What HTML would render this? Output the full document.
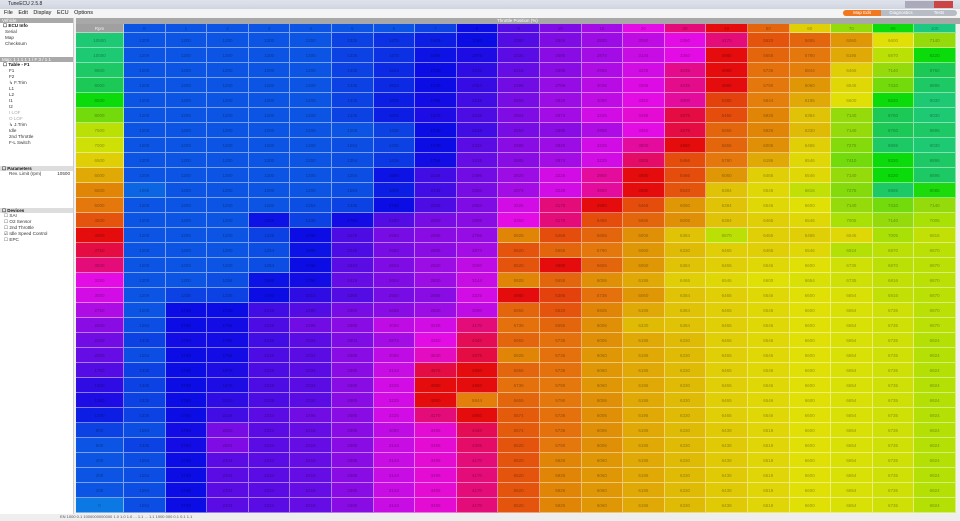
<!DOCTYPE html>
<html><head><meta charset="utf-8"><style>
*{margin:0;padding:0;box-sizing:border-box}
body{width:960px;height:521px;overflow:hidden;background:#f0f0f0;font-family:"Liberation Sans",sans-serif;position:relative}
.a{position:absolute}
#title{left:0;top:0;width:960px;height:9px;background:linear-gradient(#dfe3ec,#cfd5e0);font-size:5px;color:#222;padding:1px 0 0 8px}
#menu{left:0;top:9px;width:960px;height:9px;background:#f4f4f4;font-size:5.5px;color:#111;padding:1px 0 0 4px;word-spacing:4px}
#lp{left:0;top:18px;width:74px;height:496px;background:#fff;border-right:1px solid #ccc;font-size:4.6px;color:#333;line-height:6px}
.gb{background:#a9a9a9;color:#fff;height:5px;line-height:5px;font-size:4.5px;padding-left:2px}
.hd{font-weight:bold;color:#111;padding-left:3px}
.it{padding-left:9px}
#top{left:76px;top:18px;width:884px;height:6px;background:#a8a8a8}
#grid{left:76px;top:24px;width:880px}
.r{display:flex;height:15px}
.h{height:9px}
.c{width:41.6px;flex:none;border-right:1px solid rgba(255,255,255,.45);border-bottom:1px solid rgba(255,255,255,.45);font-size:4.5px;color:rgba(0,0,0,.35);display:flex;align-items:center;justify-content:center}
.c0{width:48px}
#st{left:0;top:514px;width:960px;height:7px;background:#eee;font-size:4px;color:#555;padding-left:60px}
</style></head><body>
<div id="title" class="a">TuneECU 2.5.8</div>
<div class="a" style="left:905px;top:1px;width:48px;height:7px;background:linear-gradient(90deg,#aab 0,#aab 60%,#c44 60%)"></div>
<div id="menu" class="a">File Edit Display ECU Options</div>
<div id="top" class="a"></div>
<div class="a" style="left:497px;top:18px;font-size:4.5px;color:#fff">Throttle Position (%)</div>
<div class="a" style="left:843px;top:10px;width:38px;height:6px;background:#f07820;border-radius:3px 0 0 3px;font-size:4.5px;color:#fff;text-align:center;line-height:6px">Map Edit</div>
<div class="a" style="left:881px;top:10px;width:40px;height:6px;background:#b8bcc4;font-size:4.5px;color:#fff;text-align:center;line-height:6px">Diagnostics</div>
<div class="a" style="left:921px;top:10px;width:36px;height:6px;background:#b8bcc4;border-radius:0 3px 3px 0;font-size:4.5px;color:#fff;text-align:center;line-height:6px">Tests</div>
<div id="lp" class="a">
<div class="gb">Vehicle</div>
<div class="hd">☐ ECU Info</div><div class="it" style="padding-left:5px">Serial<br>Map<br>Checksum</div>
<div style="height:10px"></div>
<div class="gb">Map: 1 1 1 1 1 / F 3 / 1 1</div>
<div class="hd">☐ Table - F1</div>
<div class="it">F1<br>F2<br>↳ F.Trim<br>L1<br>L2<br>I1<br>I2<br><span style="color:#aaa">I LOF<br>O LOF</span><br>↳ J.Trim<br>Idle<br>2nd Throttle<br>F-L Switch</div>
<div style="height:20px"></div>
<div class="gb" style="background:#ddd;color:#111;font-weight:bold">☐ Parameters</div>
<div class="it">Rev. Limit (rpm) <span style="float:right;padding-right:3px">10500</span></div>
<div style="height:31px"></div>
<div class="gb" style="background:#ddd;color:#111;font-weight:bold">☐ Devices</div>
<div style="padding-left:4px">☐ SAI<br>☐ O2 Sensor<br>☐ 2nd Throttle<br>☑ Idle Speed Control<br>☐ EPC</div>
</div>
<div id="grid" class="a"></div>
<div id="st" class="a">EN 1000 0.1 1000000000000 1.0 1.0 1.0 ... 1.1 ... 1.1 1000 000 0.1 0.1 1.1</div>
<script>
var R=[
[220,220,220,220,220,225,230,235,240,260,272,280,290,300,330,380,385,400,420,440],
[220,220,220,220,220,225,230,238,245,262,275,282,292,300,360,385,390,405,430,480],
[220,220,220,220,220,225,232,240,250,265,275,285,295,325,360,388,392,415,440,500],
[220,220,220,220,220,225,232,240,252,268,278,288,298,325,360,390,400,418,450,505],
[220,220,220,220,220,225,235,242,255,270,280,290,300,320,375,392,405,420,480,510],
[220,220,220,220,220,225,235,245,258,272,282,295,305,345,378,395,412,440,500,510],
[220,220,220,220,220,220,225,240,255,270,275,285,300,345,385,395,410,440,500,505],
[220,220,220,220,220,222,225,240,262,275,280,295,320,360,385,398,415,445,505,510],
[220,220,220,220,220,222,228,242,265,275,282,295,335,378,390,405,418,450,480,505],
[220,220,220,220,220,222,238,255,268,280,295,320,360,378,400,415,418,440,480,505],
[215,220,220,220,220,222,235,255,270,282,295,320,360,380,412,418,428,445,505,475],
[220,220,220,220,222,225,240,258,272,295,330,360,378,400,412,418,420,440,450,440],
[220,220,220,238,225,242,260,270,275,300,330,378,385,398,412,415,418,435,440,435],
[220,220,220,225,240,258,270,275,278,395,378,385,398,412,430,415,415,418,435,428],
[220,220,220,222,238,258,270,275,282,380,385,390,400,410,415,415,418,432,430,430],
[220,220,220,222,240,262,272,280,290,380,360,385,400,412,415,418,420,425,430,430],
[220,220,222,238,242,265,272,280,292,395,385,398,405,415,418,420,422,425,428,430],
[220,225,225,240,250,260,270,275,295,360,375,388,400,412,415,418,420,422,428,430],
[220,240,240,255,260,270,275,280,290,385,380,395,405,412,415,418,420,422,425,430],
[222,240,242,258,268,275,290,295,330,388,385,398,410,412,415,418,420,422,425,430],
[225,242,242,255,262,272,282,300,340,385,388,398,405,410,415,418,420,422,425,432],
[222,240,242,258,262,275,290,310,345,395,388,400,405,410,415,418,420,422,425,432],
[225,240,245,258,262,275,292,345,360,385,388,400,405,410,415,418,420,422,425,432],
[225,240,245,258,262,275,295,360,360,388,390,400,405,410,415,418,420,422,425,432],
[225,240,250,258,262,275,295,360,392,385,390,398,405,410,415,418,420,422,425,432],
[225,240,255,262,268,275,295,330,360,382,388,398,405,410,415,418,420,422,425,432],
[222,242,270,262,265,275,290,305,340,382,388,398,405,410,414,417,420,422,425,432],
[225,242,272,262,265,275,292,305,335,380,390,398,405,410,414,417,420,422,425,432]];
var last=[222,240,262,262,265,275,292,305,330,380,395,400,405,410,414,417,420,422,425,432];
while(R.length<32)R.push(last);
var rpmH=[510,510,505,500,480,450,430,425,415,405,395,390,380,360,345,330,300,295,285,275,268,265,260,250,245,235,225,220,220,220,220,210];
var rpm=[10500,10000,9500,9000,8500,8000,7500,7000,6500,6000,5500,5000,4500,4000,3750,3500,3250,3000,2750,2500,2250,2000,1750,1500,1250,1000,800,600,400,200,100,0];
var hdrH=[220,220,220,220,220,220,220,225,240,260,272,282,300,330,360,385,415,440,480,515];
var hdr=[0,1,2,3,4,5,6,7,8,9,10,15,20,30,40,50,60,70,80,100];
function col(h){h=h%360;var s=90,l=47;if(h>=35&&h<=75){s=95;l=45}if(h>=80&&h<=140){l=45}if(h>=140&&h<=170){s=75;l=45}return"hsl("+h+","+s+"%,"+l+"%)"}
var g=document.getElementById("grid"),html='<div class="r h"><div class="c c0" style="background:#a0a0a0;color:#eee">Rpm</div>';
for(var j=0;j<20;j++)html+='<div class="c" style="background:'+col(hdrH[j])+'">'+hdr[j]+'</div>';
html+='</div>';
for(var i=0;i<32;i++){html+='<div class="r"><div class="c c0" style="background:'+col(rpmH[i])+'">'+rpm[i]+'</div>';
for(var j=0;j<20;j++){var v=Math.round(1200+(R[i][j]-220)*27);html+='<div class="c" style="background:'+col(R[i][j])+'">'+v+'</div>';}
html+='</div>';}
g.innerHTML=html;
</script>
</body></html>
